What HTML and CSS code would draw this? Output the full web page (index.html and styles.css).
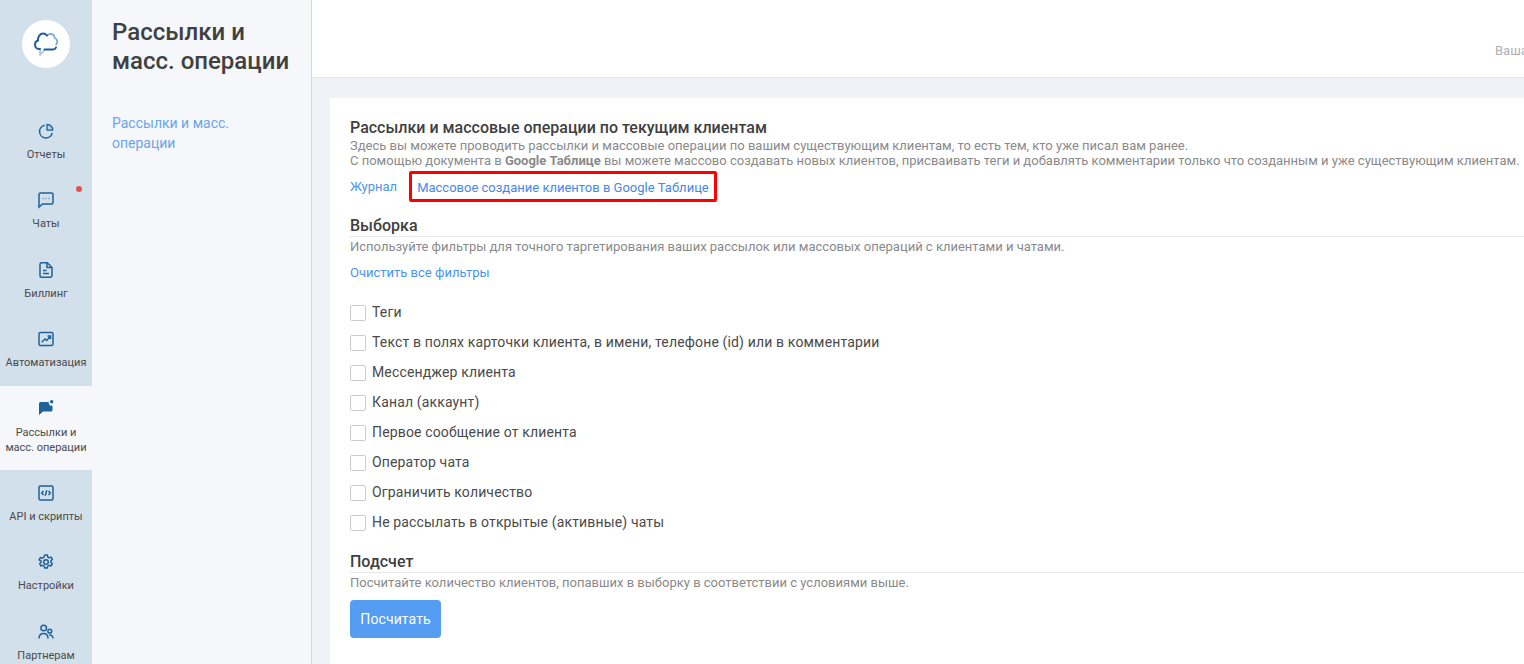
FILE: index.html
```html
<!DOCTYPE html>
<html lang="ru">
<head>
<meta charset="utf-8">
<title>Рассылки и масс. операции</title>
<link rel="stylesheet" href="styles.css">
</head>
<body>
<div class="app">
  <nav class="rail">
    <div class="logo">
      <svg width="24" height="24" viewBox="0 0 24 24" fill="none"><path d="M13 3.500C14 2.500 15 2 16.500 2c2.300 0 4 1.700 4.200 4 1.500.5 2.500 2 2.500 3.700 0 1-.4 2-1 2.800" stroke="#7fabd3" stroke-width="1.800" stroke-linecap="round"/><path d="M6 16.500V23l4.700-5.500" stroke="#a9c6e2" stroke-width="1.700" stroke-linejoin="round"/><path d="M6 17H5C2.500 17 1 14.800 1 12.500c0-2 1.200-3.500 3-4C3.800 4.500 6 1.500 9 1.500c1.700 0 3 .7 4 2" stroke="#1f5f99" stroke-width="2" stroke-linecap="round"/><path d="M10.500 17.500H19c1.300 0 2.500-.7 3-2" stroke="#1f5f99" stroke-width="2" stroke-linecap="round"/></svg>
    </div>
    <a class="item"><svg class="ic" viewBox="0 0 16 16"><path d="M6.700 2.300A6.400 6.400 0 1 0 14.200 10"/><path class="wedge" d="M9 1.300a5.800 5.800 0 0 1 5.800 5.800H9z"/></svg><span>Отчеты</span></a>
    <a class="item dot"><svg class="ic" viewBox="0 0 16 16"><path d="M1 2.500A1.500 1.500 0 0 1 2.500 1h11A1.500 1.500 0 0 1 15 2.500v8a1.500 1.500 0 0 1-1.500 1.500H4.500L1 15z"/><path class="dots" d="M4.500 6.500h1.500M7.300 6.500h1.500M10.100 6.500h1.500"/></svg><span>Чаты</span></a>
    <a class="item"><svg class="ic" viewBox="0 0 16 16"><path d="M2 2.200A1.500 1.500 0 0 1 3.500.800h5.800L14 5.500v8.200a1.500 1.500 0 0 1-1.500 1.500h-9A1.500 1.500 0 0 1 2 13.700z"/><path d="M9 1v4.500h5M5 8.500h3.500M5 11.500h6"/></svg><span>Биллинг</span></a>
    <a class="item"><svg class="ic" viewBox="0 0 16 16"><rect x="1" y="1.500" width="14" height="13" rx="1.500"/><path d="M3.800 11.200 7 8l1.800 1.500 3.200-4M9.500 5H12.500V8"/></svg><span>Автоматизация</span></a>
    <a class="item active"><svg class="ic" viewBox="0 0 16 16"><path class="solid" d="M2.500 2h8.300a3 3 0 0 0 3.700 3.700V10a1.500 1.500 0 0 1-1.500 1.500H5L1 15V3.500A1.500 1.500 0 0 1 2.500 2z"/><circle class="solid" cx="13.700" cy="1.700" r="1.700"/></svg><span>Рассылки и<br>масс. операции</span></a>
    <a class="item"><svg class="ic" viewBox="0 0 16 16"><rect x="1" y="1" width="14" height="14" rx="1.500"/><path d="M5.500 6 3.700 8l1.800 2M10.500 6l1.800 2-1.800 2M8.800 5.300l-1.600 5.400"/></svg><span>API и скрипты</span></a>
    <a class="item"><svg class="ic" viewBox="0 0 16 16"><circle cx="8" cy="8" r="2.300"/><path d="M6.700 1h2.600l.4 2 1.500.8 1.900-.7 1.300 2.300-1.500 1.300v1.700l1.500 1.300-1.300 2.300-1.900-.7-1.500.8-.4 2H6.700l-.4-2-1.500-.8-1.900.7-1.300-2.300 1.500-1.300V7.100L1.100 5.800l1.300-2.300 1.900.7 1.500-.8z" stroke-linejoin="round"/></svg><span>Настройки</span></a>
    <a class="item"><svg class="ic" viewBox="0 0 16 16"><circle cx="5.700" cy="4" r="2.800"/><circle cx="11.800" cy="7.200" r="1.900"/><path d="M1 14.500c0-3.300 2-5 4.700-5s4.300 1.700 4.300 5M11.200 11c2.200-.2 3.800 1 3.800 3.500"/></svg><span>Партнерам</span></a>
  </nav>
  <aside class="side">
    <h1 class="side-title">Рассылки и масс. операции</h1>
    <a class="side-link">Рассылки и масс. операции</a>
  </aside>
  <div class="main">
    <header class="top"><span class="top-text">Ваша</span></header>
    <section class="card">
      <h2 class="h-main">Рассылки и массовые операции по текущим клиентам</h2>
      <p class="desc">Здесь вы можете проводить рассылки и массовые операции по вашим существующим клиентам, то есть тем, кто уже писал вам ранее.<br>С помощью документа в <b>Google Таблице</b> вы можете массово создавать новых клиентов, присваивать теги и добавлять комментарии только что созданным и уже существующим клиентам.</p>
      <div class="links"><a class="link">Журнал</a><a class="link boxed">Массовое создание клиентов в Google Таблице</a></div>
      <h2 class="h-sec">Выборка</h2>
      <p class="desc">Используйте фильтры для точного таргетирования ваших рассылок или массовых операций с клиентами и чатами.</p>
      <a class="link clear">Очистить все фильтры</a>
      <ul class="checks">
        <li><i class="box"></i>Теги</li>
        <li><i class="box"></i>Текст в полях карточки клиента, в имени, телефоне (id) или в комментарии</li>
        <li><i class="box"></i>Мессенджер клиента</li>
        <li><i class="box"></i>Канал (аккаунт)</li>
        <li><i class="box"></i>Первое сообщение от клиента</li>
        <li><i class="box"></i>Оператор чата</li>
        <li><i class="box"></i>Ограничить количество</li>
        <li><i class="box"></i>Не рассылать в открытые (активные) чаты</li>
      </ul>
      <h2 class="h-sec">Подсчет</h2>
      <p class="desc">Посчитайте количество клиентов, попавших в выборку в соответствии с условиями выше.</p>
      <button class="btn">Посчитать</button>
    </section>
  </div>
</div>
</body>
</html>
```
FILE: styles.css
```css
* { box-sizing: border-box; }
html, body { margin: 0; height: 100%; overflow: hidden; }
body { font-family: Roboto, "Liberation Sans", sans-serif; color: #3a3a3a; background: #f0f2f7; }
.app { display: flex; height: 664px; overflow: hidden; }
.rail { width: 92px; flex: none; background: #d2e0eb; display: flex; flex-direction: column; }
.logo { width: 48px; height: 48px; border-radius: 50%; background: #fff; margin: 20px 0 0 22px; display: flex; align-items: center; justify-content: center; flex: none; }
.item { position: relative; height: 69.4px; flex: none; display: flex; flex-direction: column; align-items: center; padding-top: 15px; font-size: 11px; line-height: 15px; color: #4a4a4a; text-align: center; }
.logo + .item { margin-top: 40px; }
.item span { margin-top: 8px; }
.item.active { height: 84.5px; background: #f5f7fa; padding-top: 14px; }
.item.active span { margin-top: 9px; }
.item.dot::after { content: ""; position: absolute; top: 9px; left: 76px; width: 6px; height: 6px; border-radius: 50%; background: #e8504f; }
.ic { width: 16px; height: 16px; fill: none; stroke: #1f6199; stroke-width: 1.500; overflow: visible; }
.ic .solid { fill: #1f6199; stroke: none; }
.ic .wedge { fill: #b5cde2; stroke-width: 1.300; stroke-linejoin: round; }
.ic .dots { stroke: #7fa8cc; stroke-width: 1.700; }
.side { width: 220px; flex: none; background: #f5f7fa; border-right: 1px solid #d8d8d8; padding: 18px 20px; }
.side-title { margin: 0; font-size: 24px; line-height: 29px; font-weight: 500; color: #404040; }
.side-link { display: block; margin-top: 37px; font-size: 14px; line-height: 20px; color: #6ba4ec; }
.main { flex: 1; min-width: 0; }
.top { height: 78px; background: #fff; border-bottom: 1px solid #e8e8ec; display: flex; justify-content: flex-end; padding-top: 43px; }
.top-text { font-size: 13px; line-height: 15px; color: #b0b0b0; width: 29px; overflow: hidden; white-space: nowrap; }
.card { background: #fff; margin: 20px 0 0 18px; height: 600px; padding: 20px 0 0 20px; }
.h-main { margin: 0; font-size: 16px; line-height: 19px; font-weight: 500; color: #404040; }
.desc { margin: 0; font-size: 13px; line-height: 15px; color: #8a8a8a; white-space: nowrap; }
.desc b { font-weight: 700; }
.h-main + .desc { margin-top: 1px; }
.h-sec + .desc { margin-top: 2px; }
.links { display: flex; align-items: center; margin-top: 3px; }
.link { font-size: 13px; line-height: 15px; color: #4c94e8; display: block; }
.boxed { margin-left: 12px; border: 3px solid #f00; border-radius: 2px; padding: 6px 5px; height: 31px; color: #4a86e8; }
.h-sec { margin: 13px 0 0; font-size: 16px; line-height: 21px; font-weight: 500; color: #404040; border-bottom: 1px solid #e8e8e8; }
.clear { margin-top: 11px; }
.checks { list-style: none; margin: 17px 0 0; padding: 0 0 1px; }
.checks li { display: flex; align-items: center; height: 30px; font-size: 14px; letter-spacing: .15px; color: #4a4a4a; }
.box { width: 16px; height: 16px; border: 1px solid #ccc; border-radius: 2px; margin: 2px 6px 0 0; background: #fff; }
.btn { display: block; margin-top: 10px; width: 91px; height: 38px; border: 0; border-radius: 4px; background: #549df2; color: #fff; font: 400 14px Roboto, sans-serif; letter-spacing: .1px; }
```
